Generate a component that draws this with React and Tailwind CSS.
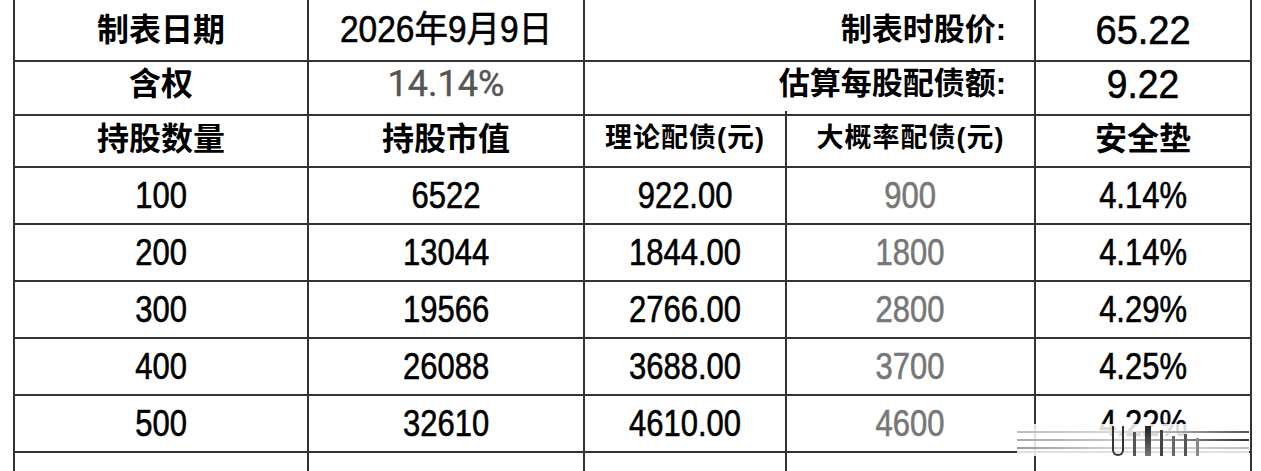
const rows = [
  ["100", "6522", "922.00", "900", "4.14%"],
  ["200", "13044", "1844.00", "1800", "4.14%"],
  ["300", "19566", "2766.00", "2800", "4.29%"],
  ["400", "26088", "3688.00", "3700", "4.25%"],
  ["500", "32610", "4610.00", "4600", "4.22%"],
];

const font = {
  fontFamily: '"Liberation Sans", "Noto Sans CJK SC", sans-serif',
};

const cell = "flex items-center justify-center border-r-2 border-b-2 border-[#333]";
const grid = "grid grid-cols-[294px_276px_202px_249px_216px]";

// narrow digits, like the condensed face in the sheet
function Num({ children, className = "scale-x-[0.86]" }) {
  return (
    <span className={`inline-block [-webkit-text-stroke:0.6px] ${className}`}>{children}</span>
  );
}

export default function App() {
  return (
    <div className="w-[1261px] h-[471px] overflow-hidden bg-white text-black" style={font}>
      <div className="relative ml-[13px] w-[1239px] border-l-2 border-[#333]">
        {/* top info rows */}
        <div className={`${grid} h-[54px]`}>
          <div className={`${cell} text-[32px] font-bold`}>制表日期</div>
          <div className={`${cell} text-[36px]`}>
            <Num className="scale-x-[0.93]">2026年9月9日</Num>
          </div>
          <div className={`${cell} col-span-2 justify-end pr-[28px] text-[31px] font-bold`}>
            制表时股价:
          </div>
          <div className={`${cell} text-[40px]`}>
            <Num className="scale-x-[0.95]">65.22</Num>
          </div>
        </div>
        <div className={`${grid} h-[57px]`}>
          <div className={`${cell} text-[32px] font-bold`}>含权</div>
          <div className={`${cell} text-[36px] text-[#555]`} style={{ fontFamily: "Roboto, sans-serif" }}>
            <span className="[-webkit-text-stroke:0.4px]">14.14%</span>
          </div>
          <div className={`${cell} col-span-2 justify-end pr-[28px] text-[31px] font-bold`}>
            估算每股配债额:
          </div>
          <div className={`${cell} text-[40px]`}>
            <Num className="scale-x-[0.93]">9.22</Num>
          </div>
        </div>
        {/* header */}
        <div className={`${grid} h-[57px]`}>
          <div className={`${cell} text-[32px] font-bold`}>持股数量</div>
          <div className={`${cell} text-[32px] font-bold`}>持股市值</div>
          <div className={`${cell} text-[27px] font-bold tracking-[1px]`}>理论配债(元)</div>
          <div className={`${cell} text-[27px] font-bold tracking-[1px]`}>大概率配债(元)</div>
          <div className={`${cell} text-[32px] font-bold`}>安全垫</div>
        </div>
        {rows.map((r) => (
          <div key={r[0]} className={`${grid} h-[57px] text-[36px]`}>
            <div className={cell}><Num>{r[0]}</Num></div>
            <div className={cell}><Num>{r[1]}</Num></div>
            <div className={cell}><Num>{r[2]}</Num></div>
            <div className={`${cell} text-[#777]`}><Num>{r[3]}</Num></div>
            <div className={cell}><Num>{r[4]}</Num></div>
          </div>
        ))}
        <div className={`${grid} h-[40px]`}>
          <div className={cell}></div>
          <div className={cell}></div>
          <div className={cell}></div>
          <div className={cell}></div>
          <div className={cell}></div>
        </div>

        {/* smeared watermark over the last cell */}
        <div className="absolute left-[1002px] top-[424px] w-[232px] h-[32px] bg-white/85">
          <div className="flex h-full flex-col justify-center gap-[6px]">
            <div className="h-[2px] bg-gradient-to-r from-[#bbb] via-[#ddd] to-[#555]" />
            <div className="h-[2px] bg-gradient-to-r from-[#aaa] via-[#ccc] to-[#333]" />
            <div className="h-[2px] bg-gradient-to-r from-[#999] via-[#ddd] to-[#bbb]" />
          </div>
          <div className="absolute inset-0 flex items-end gap-[9px] pl-[95px]">
            <div className="h-[30px] w-[12px] rounded-b-full border-x-2 border-b-2 border-[#333]" />
            <div className="h-[24px] w-[3px] bg-[#555]" />
            <div className="h-[30px] w-[6px] bg-gradient-to-b from-[#222] to-[#777]" />
            <div className="h-[26px] w-[3px] bg-[#444]" />
            <div className="h-[20px] w-[3px] bg-[#666]" />
            <div className="h-[22px] w-[3px] bg-[#555]" />
            <div className="h-[18px] w-[3px] bg-[#888]" />
          </div>
        </div>
      </div>
    </div>
  );
}
